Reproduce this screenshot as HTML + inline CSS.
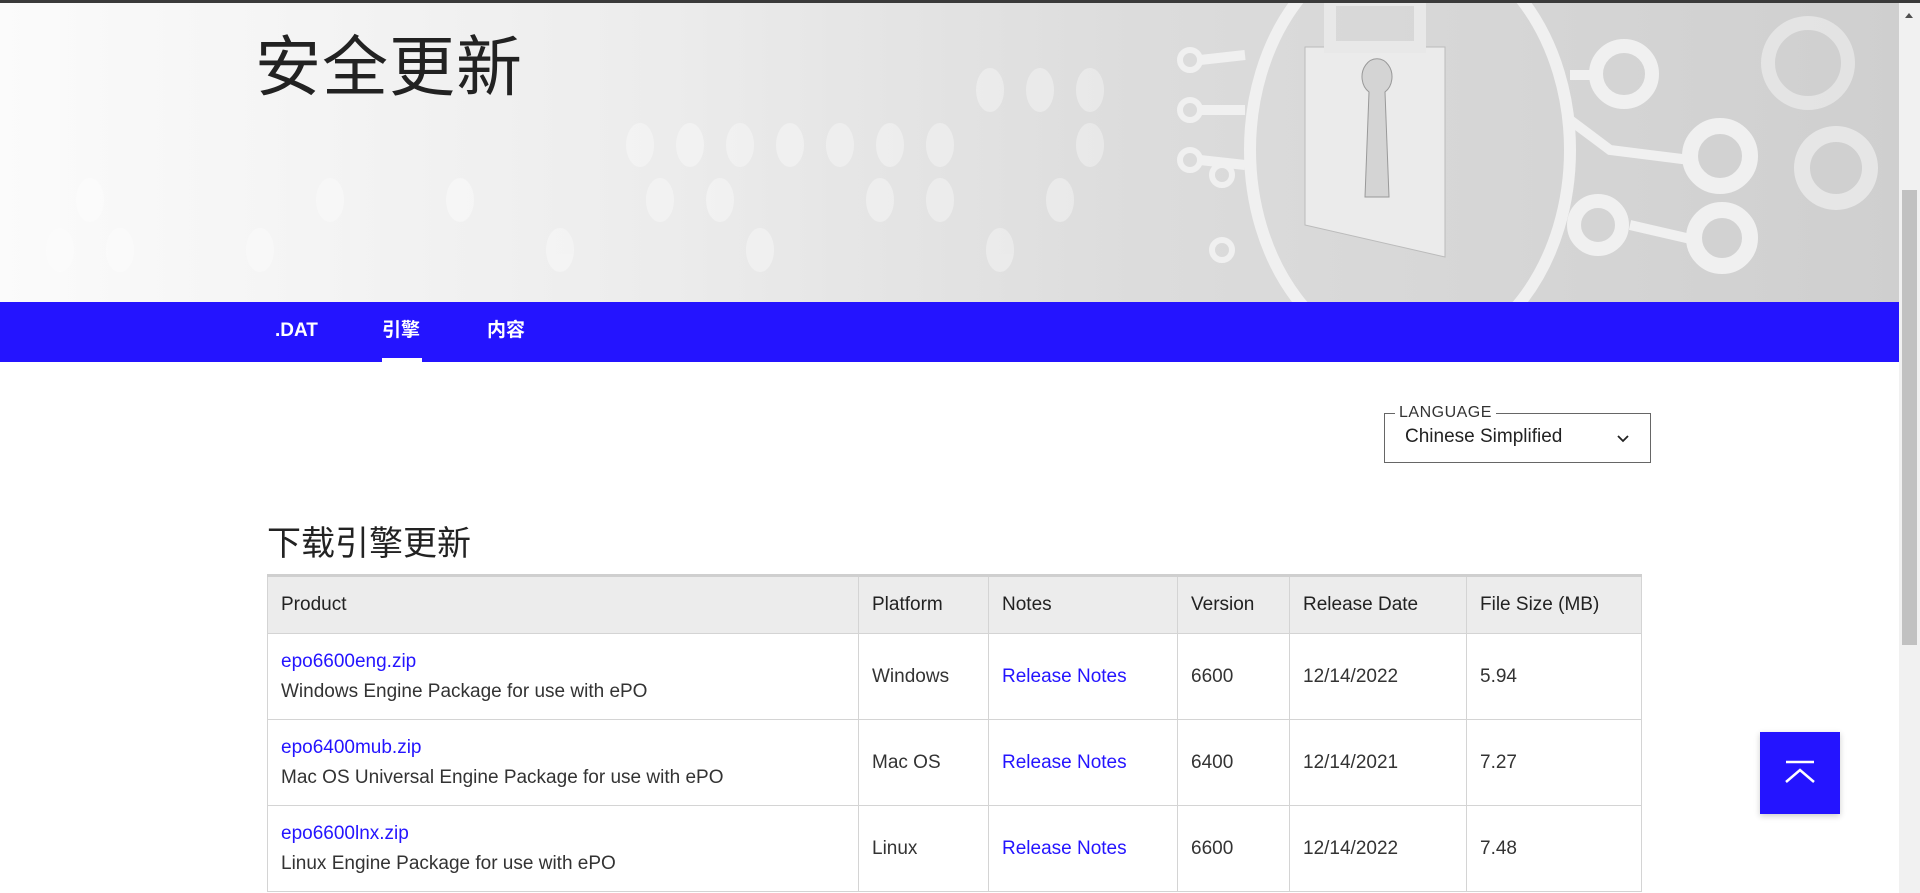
<!DOCTYPE html>
<html><head><meta charset="utf-8"><style>
*{margin:0;padding:0;box-sizing:border-box}
body{width:1920px;height:893px;overflow:hidden;background:#fff;font-family:"Liberation Sans","Noto Sans CJK SC",sans-serif;color:#222;position:relative}
.topline{position:absolute;left:0;top:0;width:1920px;height:3px;background:#3a3a3a;z-index:5}
.hero{position:absolute;left:0;top:0;width:1899px;height:302px;background:linear-gradient(90deg,#fbfbfb 0%,#ececec 35%,#dcdcdc 60%,#cfcfcf 100%);overflow:hidden}
.hero h1{position:absolute;left:255px;top:14px;font-size:66px;font-weight:400;color:#222;font-family:"Noto Sans CJK SC",sans-serif;letter-spacing:1px}
.nav{position:absolute;left:0;top:302px;width:1899px;height:60px;background:#2414ff}
.nav span{position:absolute;top:0;line-height:58px;color:#fff;font-size:19px;font-weight:700;font-family:"Liberation Sans","Noto Sans CJK SC",sans-serif}
.nav .ul{position:absolute;left:382px;top:56px;width:40px;height:4px;background:#fff}
.sb{position:absolute;left:1899px;top:3px;width:21px;height:890px;background:#f1f1f1}
.sb .th{position:absolute;left:3px;top:187px;width:15px;height:455px;background:#c1c1c1}
.sb .ar{position:absolute;left:6px;top:10px;width:0;height:0;border-left:4px solid transparent;border-right:4px solid transparent;border-bottom:5px solid #505050}
.lang{position:absolute;left:1384px;top:413px;width:267px;height:50px;border:1px solid #666}
.lang .lb{position:absolute;left:10px;top:-10px;background:#fff;padding:0 4px;font-size:16px;color:#333;letter-spacing:.5px}
.lang .v{position:absolute;left:20px;top:12px;font-size:19px;color:#222}
.lang svg{position:absolute;left:231px;top:20px}
h2{position:absolute;left:267px;top:516px;font-size:34px;font-weight:400;font-family:"Noto Sans CJK SC",sans-serif;color:#222}
table{position:absolute;left:267px;top:574px;width:1375px;border-collapse:collapse;font-size:19px;border-top:3px solid #cfcfcf}
td,th{border:1px solid #d4d4d4;padding:0 13px;text-align:left;vertical-align:middle}
th{background:#ececec;font-weight:400;height:58px;color:#222}
td{height:86px;color:#333}
a{color:#2414ff;text-decoration:none}
.top{position:absolute;left:1760px;top:732px;width:80px;height:82px;background:#2414ff;box-shadow:0 2px 6px rgba(0,0,0,.2)}
</style></head><body>
<div class="topline"></div>
<div class="hero">
<svg width="1899" height="302" style="position:absolute;left:0;top:0">
<g fill="#fff" opacity=".35">
<ellipse cx="990" cy="90" rx="14" ry="22"/><ellipse cx="1040" cy="90" rx="14" ry="22"/><ellipse cx="1090" cy="90" rx="14" ry="22"/>
<ellipse cx="640" cy="145" rx="14" ry="22"/><ellipse cx="690" cy="145" rx="14" ry="22"/><ellipse cx="740" cy="145" rx="14" ry="22"/><ellipse cx="790" cy="145" rx="14" ry="22"/><ellipse cx="840" cy="145" rx="14" ry="22"/><ellipse cx="890" cy="145" rx="14" ry="22"/><ellipse cx="940" cy="145" rx="14" ry="22"/><ellipse cx="1090" cy="145" rx="14" ry="22"/>
<ellipse cx="660" cy="200" rx="14" ry="22"/><ellipse cx="720" cy="200" rx="14" ry="22"/><ellipse cx="880" cy="200" rx="14" ry="22"/><ellipse cx="940" cy="200" rx="14" ry="22"/><ellipse cx="1060" cy="200" rx="14" ry="22"/>
<ellipse cx="90" cy="200" rx="14" ry="22"/><ellipse cx="330" cy="200" rx="14" ry="22"/><ellipse cx="560" cy="250" rx="14" ry="22"/><ellipse cx="760" cy="250" rx="14" ry="22"/>
<ellipse cx="60" cy="250" rx="14" ry="22"/><ellipse cx="120" cy="250" rx="14" ry="22"/><ellipse cx="260" cy="250" rx="14" ry="22"/><ellipse cx="460" cy="200" rx="14" ry="22"/><ellipse cx="1000" cy="250" rx="14" ry="22"/>
</g>
<g fill="none" stroke="#f0f0f0">
<ellipse cx="1410" cy="150" rx="160" ry="210" stroke-width="12"/>
<circle cx="1624" cy="74" r="28" stroke-width="14"/>
<circle cx="1720" cy="156" r="30" stroke-width="16"/>
<circle cx="1598" cy="225" r="24" stroke-width="14"/>
<circle cx="1722" cy="238" r="28" stroke-width="16"/>
<circle cx="1836" cy="168" r="34" stroke-width="16" opacity=".7"/>
<circle cx="1808" cy="63" r="40" stroke-width="14" opacity=".6"/>
<circle cx="1190" cy="60" r="10" stroke-width="6"/><circle cx="1190" cy="110" r="10" stroke-width="6"/><circle cx="1190" cy="160" r="10" stroke-width="6"/>
<circle cx="1222" cy="175" r="10" stroke-width="6"/><circle cx="1222" cy="250" r="10" stroke-width="6"/>
<path d="M1570 75 H1596 M1570 120 L1610 150 L1690 160 M1630 225 L1695 240 M1200 60 L1245 55 M1200 110 H1245 M1200 160 L1245 165" stroke-width="10"/>
</g>
<polygon points="1305,47 1445,47 1445,257 1305,225" fill="#ebebeb" stroke="#bbb"/>
<path d="M1369 92 a15 18 0 1 1 16 0 l4 105 h-24 z" fill="#d4d4d4" stroke="#999"/>
<rect x="1330" y="0" width="90" height="47" fill="none" stroke="#e8e8e8" stroke-width="12"/>
</svg>
<h1>安全更新</h1>
</div>
<div class="nav"><span style="left:275px">.DAT</span><span style="left:382px">引擎</span><span style="left:487px">内容</span><div class="ul"></div></div>
<div class="sb"><div class="ar"></div><div class="th"></div></div>
<div class="lang"><span class="lb">LANGUAGE</span><span class="v">Chinese Simplified</span>
<svg width="14" height="10"><path d="M2 2 L7 7 L12 2" stroke="#222" stroke-width="1.8" fill="none"/></svg></div>
<h2>下载引擎更新</h2>
<table>
<tr><th style="width:591px">Product</th><th style="width:130px">Platform</th><th style="width:189px">Notes</th><th style="width:112px">Version</th><th style="width:177px">Release Date</th><th>File Size (MB)</th></tr>
<tr><td><a>epo6600eng.zip</a><div style="margin-top:8px">Windows Engine Package for use with ePO</div></td><td>Windows</td><td><a>Release Notes</a></td><td>6600</td><td>12/14/2022</td><td>5.94</td></tr>
<tr><td><a>epo6400mub.zip</a><div style="margin-top:8px">Mac OS Universal Engine Package for use with ePO</div></td><td>Mac OS</td><td><a>Release Notes</a></td><td>6400</td><td>12/14/2021</td><td>7.27</td></tr>
<tr><td><a>epo6600lnx.zip</a><div style="margin-top:8px">Linux Engine Package for use with ePO</div></td><td>Linux</td><td><a>Release Notes</a></td><td>6600</td><td>12/14/2022</td><td>7.48</td></tr>
</table>
<div class="top"><svg width="80" height="82"><path d="M26 30 H54 M26 50 L40 38 L54 50" stroke="#fff" stroke-width="2.5" fill="none"/></svg></div>
</body></html>
